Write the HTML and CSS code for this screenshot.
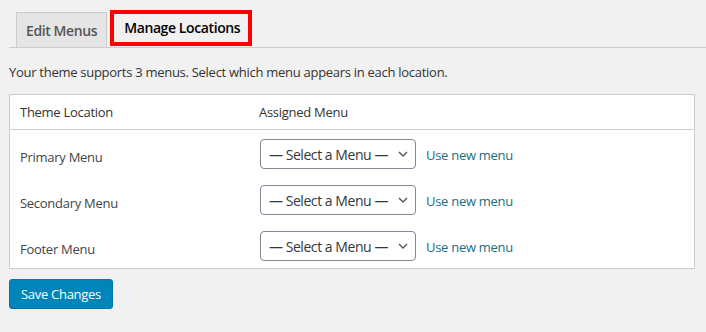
FILE: index.html
```html
<!DOCTYPE html>
<html lang="en">
<head>
    <meta charset="UTF-8">
    <meta name="viewport" content="width=device-width, initial-scale=1.0">
    <title>Menus - Manage Locations</title>
    <link rel="stylesheet" href="styles.css">
</head>
<body>
    <div class="wrap">
        <nav class="nav-tabs">
            <a href="#" class="nav-tab">Edit Menus</a>
            <a href="#" class="nav-tab nav-tab-active">Manage Locations</a>
        </nav>

        <p class="description">Your theme supports 3 menus. Select which menu appears in each location.</p>

        <form class="locations-form">
            <table class="menu-locations">
                <thead>
                    <tr>
                        <th class="col-location">Theme Location</th>
                        <th class="col-menu">Assigned Menu</th>
                    </tr>
                </thead>
                <tbody>
                    <tr>
                        <td class="location-name">Primary Menu</td>
                        <td class="location-menu">
                            <div class="menu-picker">
                                <span class="select-wrap">
                                    <select name="primary">
                                        <option>— Select a Menu —</option>
                                    </select>
                                    <svg class="chevron" viewBox="0 0 10 6" width="10" height="6"><path d="M1 1 L5 5 L9 1" fill="none" stroke="#555" stroke-width="1.4"/></svg>
                                </span>
                                <a href="#" class="new-menu">Use new menu</a>
                            </div>
                        </td>
                    </tr>
                    <tr>
                        <td class="location-name">Secondary Menu</td>
                        <td class="location-menu">
                            <div class="menu-picker">
                                <span class="select-wrap">
                                    <select name="secondary">
                                        <option>— Select a Menu —</option>
                                    </select>
                                    <svg class="chevron" viewBox="0 0 10 6" width="10" height="6"><path d="M1 1 L5 5 L9 1" fill="none" stroke="#555" stroke-width="1.4"/></svg>
                                </span>
                                <a href="#" class="new-menu">Use new menu</a>
                            </div>
                        </td>
                    </tr>
                    <tr>
                        <td class="location-name">Footer Menu</td>
                        <td class="location-menu">
                            <div class="menu-picker">
                                <span class="select-wrap">
                                    <select name="footer">
                                        <option>— Select a Menu —</option>
                                    </select>
                                    <svg class="chevron" viewBox="0 0 10 6" width="10" height="6"><path d="M1 1 L5 5 L9 1" fill="none" stroke="#555" stroke-width="1.4"/></svg>
                                </span>
                                <a href="#" class="new-menu">Use new menu</a>
                            </div>
                        </td>
                    </tr>
                </tbody>
            </table>

            <button type="button" class="button-primary">Save Changes</button>
        </form>
    </div>
</body>
</html>
```

FILE: styles.css
```css
body {
    margin: 0;
    background: #f1f1f1;
    color: #444;
    font-family: "Open Sans", "Noto Sans", sans-serif;
    font-size: 13px;
    letter-spacing: -0.28px;
}

.wrap {
    padding-left: 9px;
}

/* tabs */
.nav-tabs {
    display: flex;
    align-items: flex-end;
    height: 47px;
    padding-left: 7px;
    border-bottom: 1px solid #ccc;
}

.nav-tab {
    display: flex;
    align-items: center;
    box-sizing: border-box;
    height: 36px;
    margin-bottom: -1px;
    padding: 0 9px;
    border: 1px solid #ccc;
    background: #e5e5e5;
    color: #555;
    font-size: 14px;
    font-weight: 600;
    letter-spacing: -0.4px;
    text-decoration: none;
}

.nav-tab-active {
    width: 142px;
    justify-content: center;
    margin-left: 3px;
    margin-bottom: 1px;
    padding: 0 0 2px 2px;
    border: 4px solid #f00;
    background: #f1f1f1;
    color: #000;
}

.description {
    margin: 0;
    padding-top: 15px;
    height: 31px;
    line-height: 18px;
    color: #333;
}

/* locations table */
.menu-locations {
    width: 686px;
    border-collapse: collapse;
    background: #fff;
    border: 1px solid #ccc;
}

.menu-locations th {
    padding: 8px 10px 8px;
    height: 18px;
    line-height: 18px;
    text-align: left;
    font-weight: 400;
    color: #333;
    border-bottom: 1px solid #ccc;
}

.col-location {
    width: 219px;
}

.location-name {
    vertical-align: top;
    padding: 18px 10px 0;
    line-height: 18px;
    color: #444;
}

.location-menu {
    padding: 9px 0 7px 11px;
}

.menu-picker {
    display: flex;
    align-items: center;
    gap: 10px;
}

.select-wrap {
    position: relative;
    display: block;
}

.select-wrap select {
    display: block;
    box-sizing: border-box;
    width: 156px;
    height: 30px;
    padding: 0 16px 0 8px;
    border: 1px solid #7e8993;
    border-radius: 4px;
    background: #fff;
    color: #32373c;
    font-family: inherit;
    font-size: 14px;
    letter-spacing: -0.45px;
    appearance: none;
    -webkit-appearance: none;
}

.chevron {
    position: absolute;
    right: 8px;
    top: 12px;
    pointer-events: none;
}

.new-menu {
    padding-top: 2px;
    color: #1b6e80;
    text-decoration: none;
}

.button-primary {
    margin-top: 10px;
    width: 104px;
    height: 30px;
    padding: 0;
    border: 1px solid #0073aa;
    border-radius: 3px;
    background: #0085ba;
    color: #fff;
    font-family: inherit;
    font-size: 13px;
    letter-spacing: -0.28px;
    cursor: pointer;
}
```
